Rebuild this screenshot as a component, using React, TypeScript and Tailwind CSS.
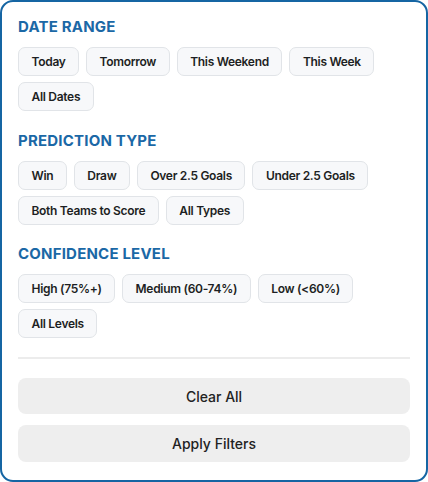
import React from "react";

const Chip = ({ label }: { label: string }) => (
  <button className="h-[29px] px-[12.5px] rounded-[7px] border border-[#e1e4e8] bg-[#f7f8fa] text-[12px] tracking-[-0.3px] font-semibold text-[#1d1f23] leading-none">
    {label}
  </button>
);

const Section = ({ title, items }: { title: string; items: string[] }) => (
  <div className="flex flex-col">
    <h3 className="text-[15px] font-bold text-[#1b68a6] tracking-[0.2px] leading-[20px]">{title}</h3>
    <div className="mt-[10px] flex flex-wrap gap-x-[7px] gap-y-[6px]">
      {items.map((i) => (
        <Chip key={i} label={i} />
      ))}
    </div>
  </div>
);

export default function App() {
  return (
    <div className="w-[428px] h-[482px] bg-white" style={{ fontFamily: "Inter, 'Noto Sans', sans-serif" }}>
      <div className="w-full h-full border-2 border-[#1565a3] rounded-[13px] px-[16px] pt-[15px] flex flex-col">
        <Section title="DATE RANGE" items={["Today", "Tomorrow", "This Weekend", "This Week", "All Dates"]} />
        <div className="mt-[20px]">
          <Section title="PREDICTION TYPE" items={["Win", "Draw", "Over 2.5 Goals", "Under 2.5 Goals", "Both Teams to Score", "All Types"]} />
        </div>
        <div className="mt-[19px]">
          <Section title="CONFIDENCE LEVEL" items={["High (75%+)", "Medium (60-74%)", "Low (<60%)", "All Levels"]} />
        </div>
        <div className="mt-[19px] h-[2px] bg-[#ececec]" />
        <button className="mt-[19px] h-[36px] rounded-[8px] bg-[#eeeeee] text-[14px] text-[#222] font-medium">Clear All</button>
        <button className="mt-[11px] h-[37px] rounded-[8px] bg-[#eeeeee] text-[14px] text-[#222] font-medium">Apply Filters</button>
      </div>
    </div>
  );
}
